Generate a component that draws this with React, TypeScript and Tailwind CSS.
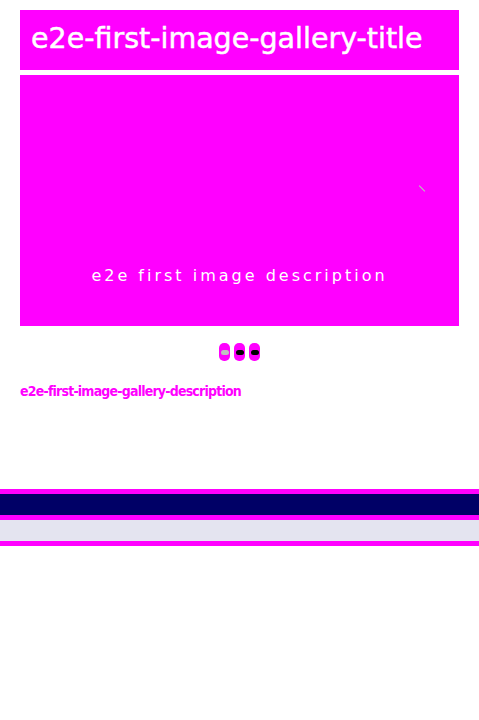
export default function App() {
  return (
    <div className="w-[479px] min-h-[720px] bg-white" style={{ fontFamily: '"DejaVu Sans", sans-serif' }}>
      <div className="px-5 pt-[10px]">
        {/* Title */}
        <div className="h-[60px] bg-[#ff00ff] flex items-center pl-[11px]">
          <h1 className="text-[28.5px] leading-none text-white pb-[1px] [-webkit-text-stroke:0.5px_white]">e2e-first-image-gallery-title</h1>
        </div>

        {/* Slide */}
        <div className="relative mt-[5px] h-[251px] bg-[#ff00ff] flex flex-col justify-end items-center pb-[42px]">
          <p className="text-[16px] leading-none text-white tracking-[3px]">e2e first image description</p>
          <span className="absolute left-[398px] top-[113px] w-[8px] h-px bg-[#b0d0b0] rotate-45" />
        </div>

        {/* Dots */}
        <div className="flex justify-center gap-[4px] mt-[17px]">
          <button className="w-[11px] h-[18px] rounded-[5px] bg-[#ff00ff] flex items-center justify-center">
            <span className="w-[8px] h-[5px] rounded-full bg-[#c0c0c0]" />
          </button>
          <button className="w-[11px] h-[18px] rounded-[5px] bg-[#ff00ff] flex items-center justify-center">
            <span className="w-[8px] h-[5px] rounded-full bg-black" />
          </button>
          <button className="w-[11px] h-[18px] rounded-[5px] bg-[#ff00ff] flex items-center justify-center">
            <span className="w-[8px] h-[5px] rounded-full bg-black" />
          </button>
        </div>

        {/* Gallery description */}
        <p
          className="mt-[23px] text-[14px] leading-none font-bold text-[#ff00ff] tracking-[-0.8px]"
          style={{ fontFamily: '"DejaVu Sans Condensed", "DejaVu Sans", sans-serif' }}
        >
          e2e-first-image-gallery-description
        </p>
      </div>

      {/* Bars */}
      <div className="mt-[91px]">
        <div className="h-[5px] bg-[#ff00ff]" />
        <div className="h-[21px] bg-[#000066]" />
        <div className="h-[5px] bg-[#ff00ff]" />
        <div className="h-[21px] bg-[#e4e4f0]" />
        <div className="h-[5px] bg-[#ff00ff]" />
      </div>
    </div>
  );
}
